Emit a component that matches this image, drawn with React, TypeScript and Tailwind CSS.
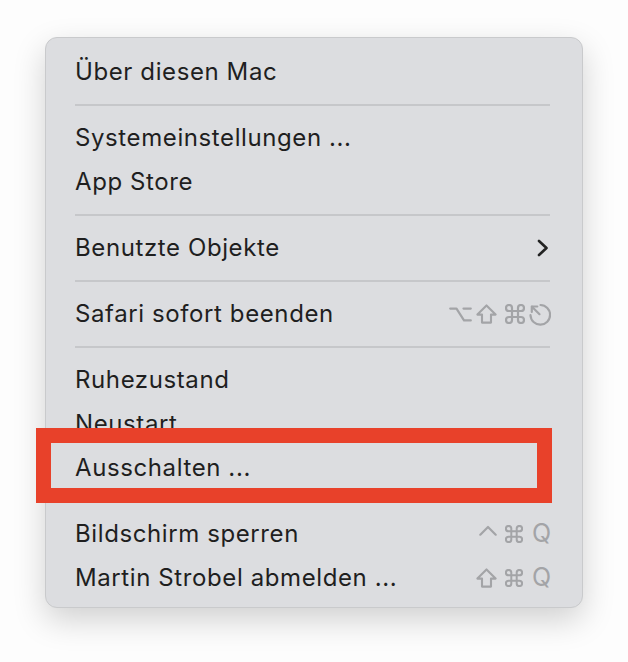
import React from "react";

const G = "#a3a4a7";

function Option() {
  return (
    <svg width="23" height="15" viewBox="0 0 23 15" fill="none" stroke={G} strokeWidth="2.2" strokeLinecap="round" strokeLinejoin="round">
      <path d="M1.2 1.6 H7.5 L15 13.4 H21.8" />
      <path d="M14.5 1.6 H21.8" />
    </svg>
  );
}
function Shift() {
  return (
    <svg width="21" height="20" viewBox="0 0 21 20" fill="none" stroke={G} strokeWidth="2.1" strokeLinejoin="round">
      <path d="M10.5 1.4 L19.6 10.6 H15 V18.6 H6 V10.6 H1.4 Z" />
    </svg>
  );
}
function Cmd({ size = 20 }: { size?: number }) {
  return (
    <svg width={size} height={size} viewBox="2 2 20 20" fill="none" stroke={G} strokeWidth="2.2" strokeLinecap="round" strokeLinejoin="round">
      <path d="M15 6v12a3 3 0 1 0 3-3H6a3 3 0 1 0 3 3V6a3 3 0 1 0-3 3h12a3 3 0 1 0-3-3" />
    </svg>
  );
}
function Esc() {
  return (
    <svg width="22" height="23" viewBox="0 0 22 23" fill="none" stroke={G} strokeWidth="2.2" strokeLinecap="round" strokeLinejoin="round">
      <path d="M11.5 2 A9.8 9.8 0 1 1 1.5 12.2" />
      <path d="M10.5 11.2 L3 3.7" />
      <path d="M2.8 3.5 V9 M2.8 3.5 H8.3" />
    </svg>
  );
}
function Ctrl() {
  return (
    <svg width="18" height="11" viewBox="0 0 18 11" fill="none" stroke={G} strokeWidth="2.2" strokeLinecap="round" strokeLinejoin="round">
      <path d="M1.3 9.7 L9 2 L16.7 9.7" />
    </svg>
  );
}
function Chevron() {
  return (
    <svg width="12" height="18" viewBox="0 0 12 18" fill="none" stroke="#232323" strokeWidth="2.6" strokeLinecap="round" strokeLinejoin="round">
      <path d="M2 2 L9.5 9 L2 16" />
    </svg>
  );
}

function Row({ label, right }: { label: string; right?: React.ReactNode }) {
  return (
    <div className="flex h-[44px] items-center justify-between">
      <span className="text-[24px] leading-none tracking-[0.6px] text-[#1f1f1f]">{label}</span>
      {right}
    </div>
  );
}

function Sep() {
  return (
    <div className="flex h-[22px] items-center pr-[1px]">
      <div className="h-[2px] w-full bg-[#c6c7ca]" />
    </div>
  );
}

function Q() {
  return <span className="text-[25px] leading-none text-[#a3a4a7]">Q</span>;
}

export default function App() {
  return (
    <div
      className="relative h-[662px] w-[628px] overflow-hidden bg-[#fdfdfd]"
      style={{ fontFamily: "Inter, 'Noto Sans', sans-serif" }}
    >
      <div className="ml-[45px] mt-[37px] w-[538px] rounded-[12px] border border-[#c9cacc] bg-[#dcdde0] pb-[7px] pl-[29px] pr-[31px] pt-[12px] shadow-[0_12px_32px_rgba(0,0,0,0.18)]">
        <Row label="Über diesen Mac" />
        <Sep />
        <Row label="Systemeinstellungen ..." />
        <Row label="App Store" />
        <Sep />
        <Row label="Benutzte Objekte" right={<div className="mr-[2px]"><Chevron /></div>} />
        <Sep />
        <Row
          label="Safari sofort beenden"
          right={
            <div className="flex items-center">
              <Option />
              <div className="ml-[4px]"><Shift /></div>
              <div className="ml-[8px]"><Cmd /></div>
              <div className="ml-[4px]"><Esc /></div>
            </div>
          }
        />
        <Sep />
        <Row label="Ruhezustand" />
        <Row label="Neustart" />
        <Row label="Ausschalten ..." />
        <Sep />
        <Row
          label="Bildschirm sperren"
          right={
            <div className="flex items-center">
              <div className="-mt-[8px]"><Ctrl /></div>
              <div className="ml-[8px]"><Cmd size={18} /></div>
              <div className="ml-[9px]"><Q /></div>
            </div>
          }
        />
        <Row
          label="Martin Strobel abmelden ..."
          right={
            <div className="flex items-center">
              <Shift />
              <div className="ml-[8px]"><Cmd size={18} /></div>
              <div className="ml-[9px]"><Q /></div>
            </div>
          }
        />
      </div>
      <div className="absolute left-[36px] top-[428px] h-[75px] w-[516px] border-[15px] border-[#e8412a]" />
    </div>
  );
}
